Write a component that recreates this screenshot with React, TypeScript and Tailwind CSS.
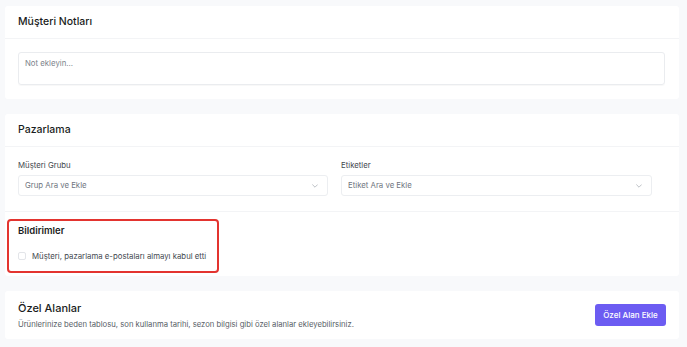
import React from "react";

function Chevron() {
  return (
    <svg width="6" height="4" viewBox="0 0 10 6" fill="none" className="text-[#a3a8b0]">
      <path d="M1 1l4 4 4-4" stroke="currentColor" strokeWidth="1.2" strokeLinecap="round" strokeLinejoin="round" />
    </svg>
  );
}

function Select({ label, placeholder }: { label: string; placeholder: string }) {
  return (
    <div className="flex flex-col">
      <div className="text-[7.8px] leading-[12px] text-[#43484f]">{label}</div>
      <div className="mt-[4px] flex h-[21px] items-center justify-between rounded-[3px] border border-[#eceef1] bg-white pl-[6px] pr-[9px]">
        <span className="text-[7.8px] text-[#70767f]">{placeholder}</span>
        <Chevron />
      </div>
    </div>
  );
}

export default function App() {
  return (
    <div className="min-h-screen bg-[#f8f9fb] pl-[5px] pr-[8px] pt-[6px] font-['Inter',sans-serif]">
      {/* Card 1 */}
      <div className="rounded-[3px] bg-white">
        <div className="flex h-[33px] items-center border-b border-[#f3f4f6] px-[13px]">
          <h2 className="text-[10.5px] font-medium text-[#1a1d21]">Müşteri Notları</h2>
        </div>
        <div className="pb-[14px] pl-[13px] pr-[14px] pt-[13px]">
          <div className="h-[33px] rounded-[3px] border border-[#eaecef] px-[6px] pt-[5px] text-[7.8px] text-[#7d838c] shadow-[0_1px_1px_rgba(0,0,0,0.03)]">
            Not ekleyin...
          </div>
        </div>
      </div>

      {/* Card 2 */}
      <div className="relative mt-[15px] rounded-[3px] bg-white">
        <div className="flex h-[33px] items-center border-b border-[#f3f4f6] px-[13px]">
          <h2 className="text-[10.5px] font-medium text-[#1a1d21]">Pazarlama</h2>
        </div>
        <div className="border-b border-[#f3f4f6] px-[13px] pb-[15px] pt-[12px]">
          <div className="grid w-[634px] grid-cols-[310px_311px] gap-x-[13px]">
            <Select label="Müşteri Grubu" placeholder="Grup Ara ve Ekle" />
            <Select label="Etiketler" placeholder="Etiket Ara ve Ekle" />
          </div>
        </div>
        <div className="px-[13px] pb-[15px] pt-[13px]">
          <div className="text-[9.5px] font-semibold leading-[12px] text-[#1a1d21]">Bildirimler</div>
          <div className="mt-[14px] flex h-[10px] items-center gap-[6px]">
            <span className="h-[8px] w-[8px] rounded-[2px] border border-[#e3e5e9] bg-white" />
            <span className="text-[7.8px] leading-[10px] text-[#43484f]">
              Müşteri, pazarlama e-postaları almayı kabul etti
            </span>
          </div>
        </div>
        <div className="pointer-events-none absolute left-[2px] top-[105px] h-[54px] w-[212px] rounded-[4px] border-2 border-[#e3342f]" />
      </div>

      {/* Card 3 */}
      <div className="mt-[15px] flex h-[48px] items-center justify-between rounded-[3px] bg-white px-[13px]">
        <div className="flex flex-col">
          <h2 className="text-[11px] font-medium leading-[14px] text-[#1a1d21]">Özel Alanlar</h2>
          <p className="mt-[5px] text-[7.7px] leading-[10px] text-[#585e67]">
            Ürünlerinize beden tablosu, son kullanma tarihi, sezon bilgisi gibi özel alanlar ekleyebilirsiniz.
          </p>
        </div>
        <button className="h-[22px] w-[71px] rounded-[3px] bg-[#6c5cf2] text-[8px] font-medium text-white">
          Özel Alan Ekle
        </button>
      </div>
    </div>
  );
}
